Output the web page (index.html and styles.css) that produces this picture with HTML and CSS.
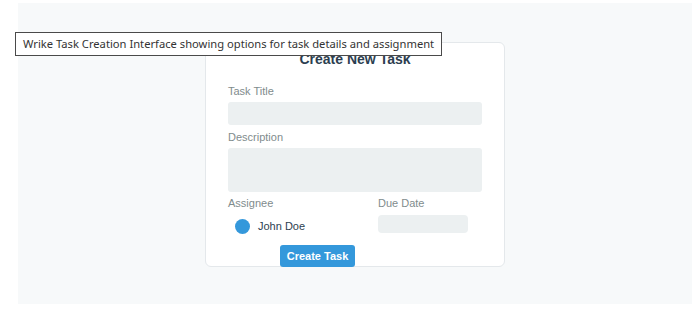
FILE: index.html
```html
<!DOCTYPE html>
<html lang="en">
<head>
    <meta charset="UTF-8">
    <meta name="viewport" content="width=device-width, initial-scale=1.0">
    <title>Create New Task</title>
    <link rel="stylesheet" href="styles.css">
</head>
<body>
    <!-- Task creation mockup -->
    <div class="stage">
        <div class="task-card">
            <h2 class="task-heading">Create New Task</h2>

            <label class="field-label">Task Title</label>
            <div class="field field-title"></div>

            <label class="field-label">Description</label>
            <div class="field field-desc"></div>

            <div class="field-row">
                <div class="assignee">
                    <label class="field-label">Assignee</label>
                    <div class="assignee-person">
                        <span class="avatar"></span>
                        <span class="person-name">John Doe</span>
                    </div>
                </div>
                <div class="due-date">
                    <label class="field-label">Due Date</label>
                    <div class="field field-date"></div>
                </div>
            </div>

            <button class="create-button">Create Task</button>
        </div>
    </div>

    <div class="tooltip">Wrike Task Creation Interface showing options for task details and assignment</div>
</body>
</html>
```

FILE: styles.css
```css
/* Page */
body {
    margin: 0;
    padding: 0;
    background-color: white;
    font-family: "Liberation Sans", Arial, sans-serif;
}

.stage {
    margin: 3px 5px 0 18px;
    height: 301px;
    padding-top: 39px;
    box-sizing: border-box;
    background-color: #f7f9fa;
}

/* Card */
.task-card {
    width: 300px;
    box-sizing: border-box;
    margin: 0 auto;
    padding: 8px 22px 0;
    background: white;
    border: 1px solid #e4e8eb;
    border-radius: 6px;
}

.task-heading {
    margin: 0 0 17px;
    font-size: 14px;
    line-height: 17px;
    text-align: center;
    color: #2c3e50;
}

.field-label {
    display: block;
    font-size: 11px;
    line-height: 13px;
    color: #7f8c8d;
    margin-bottom: 4px;
}

.field {
    background-color: #ecf0f1;
    border-radius: 3px;
}

.field-title {
    height: 23px;
    margin-bottom: 6px;
}

.field-desc {
    height: 44px;
    margin-top: 2px;
    margin-bottom: 5px;
}

.field-row {
    display: grid;
    grid-template-columns: 150px 1fr;
}

.due-date .field-label {
    margin-bottom: 5px;
}

.field-date {
    width: 90px;
    height: 18px;
    border-radius: 4px;
}

.assignee-person {
    display: flex;
    align-items: center;
    gap: 8px;
    margin: 8px 0 0 7px;
    height: 16px;
}

.avatar {
    width: 15px;
    height: 15px;
    border-radius: 50%;
    background-color: #3498db;
}

.person-name {
    font-size: 11px;
    color: #2c3e50;
}

.create-button {
    display: block;
    margin: 11px 0 -1px 52px;
    width: 75px;
    height: 22px;
    padding: 0;
    border: none;
    border-radius: 3px;
    background-color: #3498db;
    color: white;
    font-family: "Liberation Sans", Arial, sans-serif;
    font-size: 11px;
    font-weight: bold;
    position: relative;
}

/* Alt-text tooltip over the picture */
.tooltip {
    position: absolute;
    left: 15px;
    top: 32px;
    width: 427px;
    height: 24px;
    box-sizing: border-box;
    border: 1px solid #4a4a4a;
    background: white;
    color: #333;
    font-family: "Noto Sans", sans-serif;
    font-size: 11.2px;
    line-height: 22px;
    padding-left: 7px;
    white-space: nowrap;
}
```
